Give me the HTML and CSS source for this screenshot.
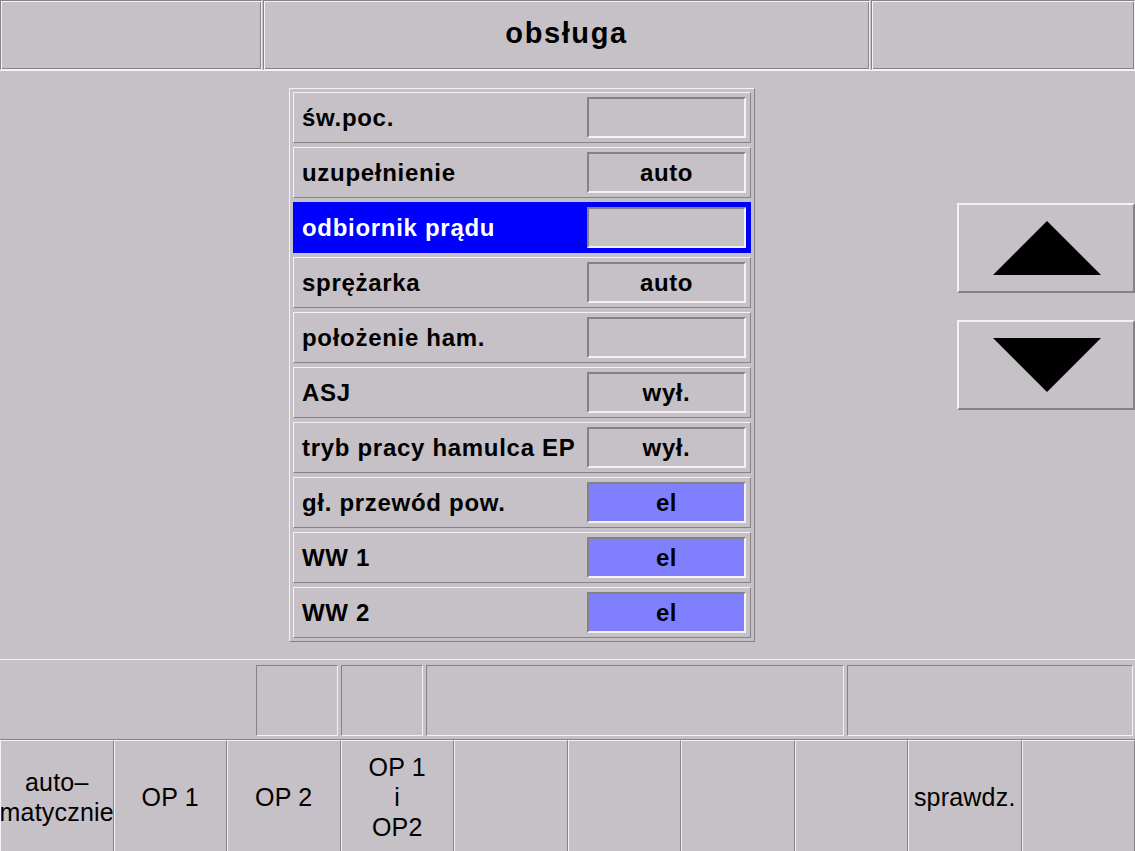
FILE: index.html
```html
<!DOCTYPE html>
<html lang="pl">
<head>
<meta charset="utf-8">
<title>obsługa</title>
<link rel="stylesheet" href="styles.css">
</head>
<body>
<div class="screen">
  <header class="topbar">
    <div class="tcell tcell-left"></div>
    <div class="tcell tcell-mid">obsługa</div>
    <div class="tcell tcell-right"></div>
  </header>

  <main class="main">
    <div class="panel">
      <div class="row"><span class="label">św.poc.</span><span class="value"></span></div>
      <div class="row"><span class="label">uzupełnienie</span><span class="value">auto</span></div>
      <div class="row row-active"><span class="label">odbiornik prądu</span><span class="value"></span></div>
      <div class="row"><span class="label">sprężarka</span><span class="value">auto</span></div>
      <div class="row"><span class="label">położenie ham.</span><span class="value"></span></div>
      <div class="row"><span class="label">ASJ</span><span class="value">wył.</span></div>
      <div class="row"><span class="label">tryb pracy hamulca EP</span><span class="value">wył.</span></div>
      <div class="row"><span class="label">gł. przewód pow.</span><span class="value value-on">el</span></div>
      <div class="row"><span class="label">WW 1</span><span class="value value-on">el</span></div>
      <div class="row"><span class="label">WW 2</span><span class="value value-on">el</span></div>
    </div>

    <div class="arrows">
      <div class="arrow-btn">
        <svg width="110" height="56" viewBox="0 0 110 56"><polygon points="55,1 1,55 109,55" fill="#000"/></svg>
      </div>
      <div class="arrow-btn">
        <svg width="110" height="56" viewBox="0 0 110 56"><polygon points="1,1 109,1 55,55" fill="#000"/></svg>
      </div>
    </div>
  </main>

  <div class="status">
    <div class="scell scell-flat"></div>
    <div class="scell scell-s"></div>
    <div class="scell scell-s"></div>
    <div class="scell scell-wide"></div>
    <div class="scell scell-last"></div>
  </div>

  <footer class="keys">
    <div class="key"><span>auto–<br>matycznie</span></div>
    <div class="key"><span>OP 1</span></div>
    <div class="key"><span>OP 2</span></div>
    <div class="key"><span>OP 1<br>i<br>OP2</span></div>
    <div class="key"></div>
    <div class="key"></div>
    <div class="key"></div>
    <div class="key"></div>
    <div class="key"><span>sprawdz.</span></div>
    <div class="key"></div>
  </footer>
</div>
</body>
</html>
```

FILE: styles.css
```css
html, body {
  margin: 0;
  padding: 0;
  background: #c6c1c6;
}

.screen {
  width: 1135px;
  height: 851px;
  display: flex;
  flex-direction: column;
  font-family: "Liberation Sans", Arial, sans-serif;
  color: #000;
  background: #c6c1c6;
  overflow: hidden;
}

/* ---------- top bar ---------- */
.topbar {
  height: 71px;
  display: flex;
  gap: 1px;
  box-sizing: border-box;
  border-bottom: 1px solid #f4f2f4;
}

.tcell {
  height: 70px;
  box-sizing: border-box;
  border: 1px solid;
  border-color: #858185 #f4f2f4 #f4f2f4 #858185;
  box-shadow: inset 1px 1px 0 #f4f2f4, inset -1px -1px 0 #858185;
}

.tcell-left { width: 262px; }
.tcell-mid {
  width: 607px;
  display: flex;
  align-items: center;
  justify-content: center;
  font-size: 29px;
  font-weight: bold;
  letter-spacing: 1.6px;
  padding-bottom: 4px;
}
.tcell-right { flex: 1; }

/* ---------- main ---------- */
.main {
  height: 588px;
  display: flex;
  align-items: flex-start;
  padding-left: 289px;
  box-sizing: border-box;
}

.panel {
  margin-top: 17px;
  width: 466px;
  box-sizing: border-box;
  border: 1px solid;
  border-color: #f4f2f4 #858185 #858185 #f4f2f4;
  padding: 3px;
  display: flex;
  flex-direction: column;
  gap: 4px;
}

.row {
  height: 51px;
  box-sizing: border-box;
  border: 1px solid;
  border-color: #f4f2f4 #858185 #858185 #f4f2f4;
  display: flex;
  align-items: center;
  padding: 0 4px 0 8px;
}

.label {
  flex: 1;
  font-size: 24px;
  font-weight: bold;
  letter-spacing: 0.7px;
  white-space: nowrap;
  padding-top: 1px;
}

.value {
  width: 159px;
  height: 41px;
  box-sizing: border-box;
  border: 2px solid;
  border-color: #858185 #f4f2f4 #f4f2f4 #858185;
  display: flex;
  align-items: center;
  justify-content: center;
  font-size: 24px;
  font-weight: bold;
  letter-spacing: 0.6px;
  background: #c6c1c6;
}

.value-on {
  background: #8080ff;
}

.row-active {
  background: #0000ff;
  border-color: #0000ff;
}
.row-active .label {
  color: #fff;
}

/* ---------- arrow buttons ---------- */
.arrows {
  margin-left: auto;
  margin-top: 132px;
  width: 178px;
  display: flex;
  flex-direction: column;
  gap: 27px;
}

.arrow-btn {
  height: 90px;
  box-sizing: border-box;
  border: 2px solid;
  border-color: #f4f2f4 #858185 #858185 #f4f2f4;
  display: flex;
  align-items: center;
  justify-content: center;
}
.arrow-btn svg {
  display: block;
  margin-left: 2px;
}

/* ---------- status bar ---------- */
.status {
  height: 81px;
  box-sizing: border-box;
  border-top: 1px solid #f4f2f4;
  border-bottom: 1px solid #858185;
  padding: 5px 2px 2px 0;
  display: flex;
  gap: 3px;
}

.scell {
  height: 71px;
  box-sizing: border-box;
  border: 1px solid;
  border-color: #858185 #f4f2f4 #f4f2f4 #858185;
}
.scell-flat {
  width: 256px;
  border-color: transparent;
  margin-right: -3px;
}
.scell-s { width: 82px; }
.scell-wide { width: 418px; }
.scell-last { flex: 1; }

/* ---------- soft keys ---------- */
.keys {
  flex: 1;
  display: flex;
}

.key {
  flex: 1;
  min-width: 0;
  box-sizing: border-box;
  border-top: 1px solid #f4f2f4;
  border-left: 1px solid #f4f2f4;
  border-right: 1px solid #858185;
  display: flex;
  align-items: center;
  justify-content: center;
  overflow: hidden;
  font-size: 25px;
  line-height: 30px;
  letter-spacing: 0.2px;
  text-align: center;
  white-space: nowrap;
}
.key span {
  display: block;
  padding-top: 2px;
}
```
